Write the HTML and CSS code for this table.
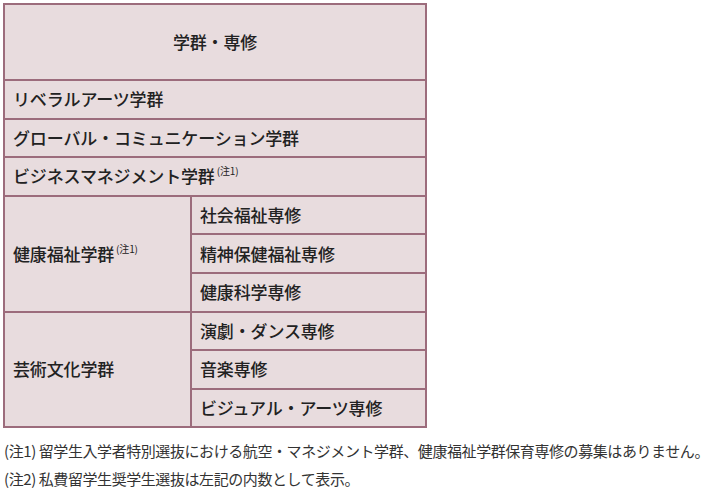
FILE: index.html
```html
<!DOCTYPE html>
<html lang="ja">
<head>
<meta charset="utf-8">
<link rel="stylesheet" href="styles.css">
</head>
<body>
<table class="grid">
  <colgroup><col class="c1"><col class="c2"></colgroup>
  <tr class="head"><th colspan="2">学群・専修</th></tr>
  <tr><td colspan="2">リベラルアーツ学群</td></tr>
  <tr><td colspan="2">グローバル・コミュニケーション学群</td></tr>
  <tr><td colspan="2">ビジネスマネジメント学群<sup>(注1)</sup></td></tr>
  <tr><td rowspan="3">健康福祉学群<sup>(注1)</sup></td><td>社会福祉専修</td></tr>
  <tr><td>精神保健福祉専修</td></tr>
  <tr><td>健康科学専修</td></tr>
  <tr><td rowspan="3">芸術文化学群</td><td>演劇・ダンス専修</td></tr>
  <tr><td>音楽専修</td></tr>
  <tr><td>ビジュアル・アーツ専修</td></tr>
</table>
<div class="notes">
  <p>(注1) 留学生入学者特別選抜における航空・マネジメント学群、健康福祉学群保育専修の募集はありません。</p>
  <p>(注2) 私費留学生奨学生選抜は左記の内数として表示。</p>
</div>
</body>
</html>
```
FILE: styles.css
```css
html, body {
  margin: 0;
  background: #ffffff;
}
body {
  padding: 3px 0 0 3px;
  font-family: "Noto Sans CJK JP", "Noto Sans", sans-serif;
  color: #222;
}
.grid {
  border-collapse: collapse;
  width: 424px;
  table-layout: fixed;
  background: #e8dcde;
}
.c1 { width: 187px; }
.grid th, .grid td {
  border: 2px solid #9c6c7c;
  font-size: 17px;
  font-weight: 500;
  line-height: 20px;
  height: 36.6px;
  padding: 0 0 0 8px;
  text-align: left;
  vertical-align: middle;
  letter-spacing: -0.15px;
  white-space: nowrap;
}
.grid tr.head th {
  height: 74px;
  text-align: center;
  padding: 0;
}
.grid sup {
  font-size: 10px;
  font-weight: 400;
  vertical-align: 8px;
  line-height: 0;
  margin-left: 2px;
}
.notes {
  margin-top: 9px;
  padding-left: 1px;
  font-size: 15px;
  color: #333;
  letter-spacing: -0.42px;
}
.notes p {
  margin: 0;
  line-height: 28px;
  white-space: nowrap;
}
```
